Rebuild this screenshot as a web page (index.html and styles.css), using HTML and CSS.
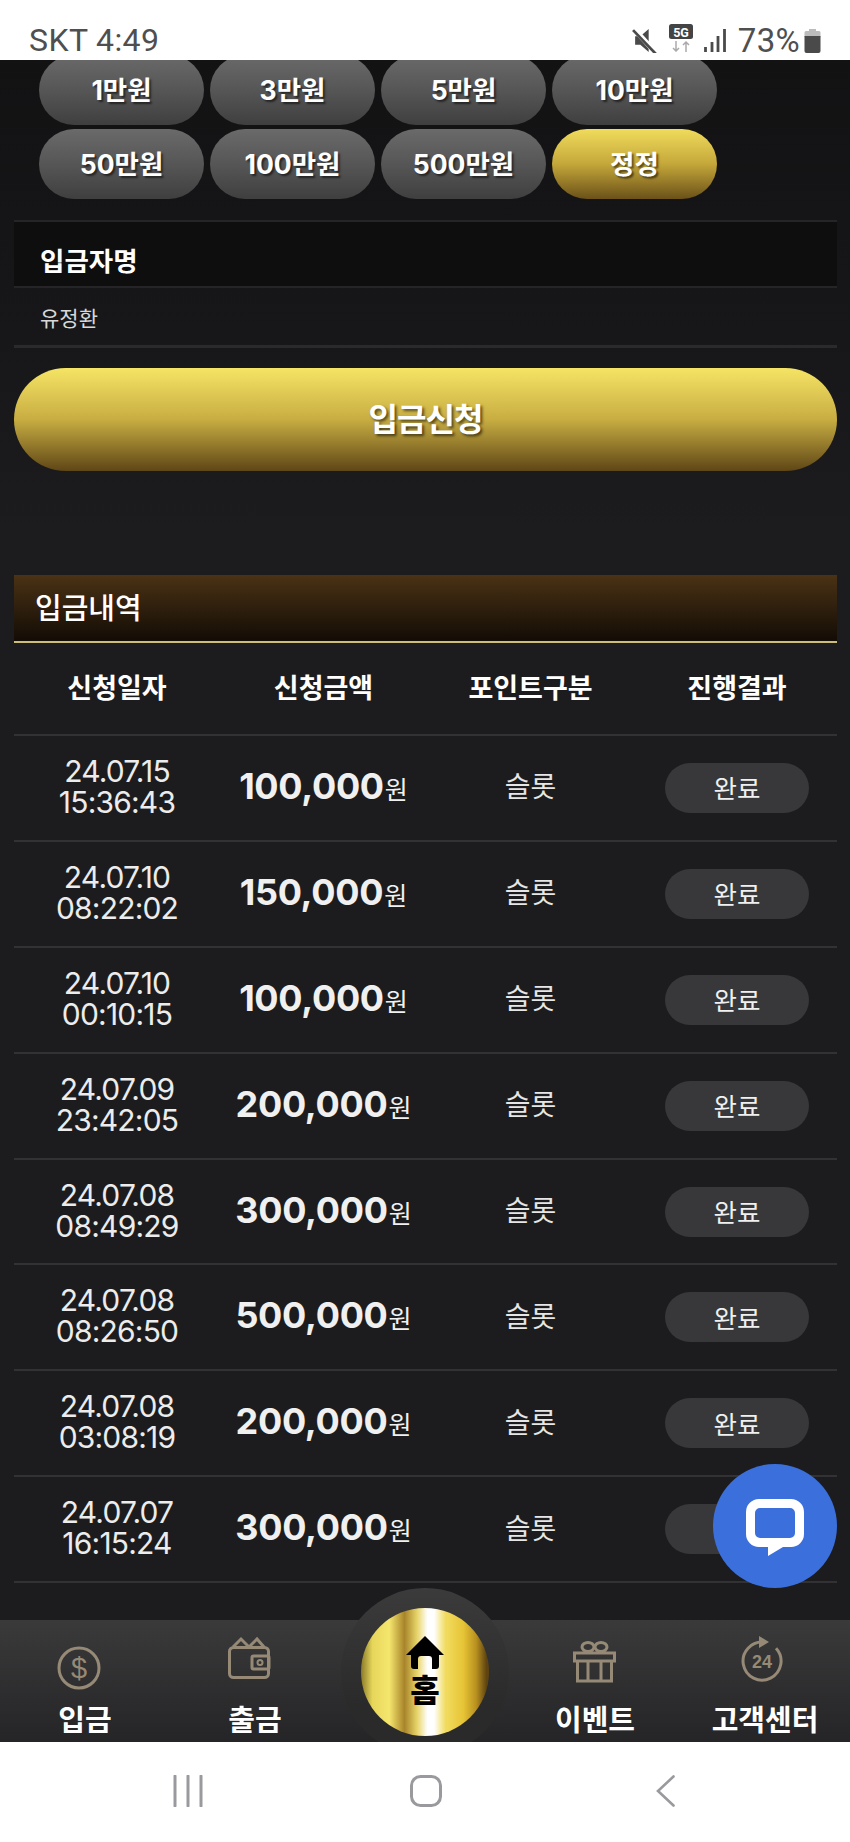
FILE: index.html
```html
<!DOCTYPE html>
<html lang="ko">
<head>
<meta charset="utf-8">
<title>입금</title>
<link rel="stylesheet" href="styles.css">
</head>
<body>
<div class="phone">
  <header class="status">
    <span class="status-left">SKT 4:49</span>
    <div class="status-right">
      <svg class="st-mute" viewBox="0 0 24 24"><path d="M3 8h5l8-7v22l-8-7H3z" fill="#4a4a4a"/><path d="M2 1l21 23" stroke="#fff" stroke-width="5"/><path d="M1 2l22 23" stroke="#4a4a4a" stroke-width="2.6"/></svg>
      <svg class="st-5g" viewBox="0 0 24 28"><rect width="24" height="15" rx="2.5" fill="#444"/><text x="12" y="12.5" text-anchor="middle" class="st-5g-text">5G</text><path d="M7 17v10M4 24l3 3 3-3" stroke="#aaa" stroke-width="1.5" fill="none"/><path d="M17 28V18M14 21l3-3 3 3" stroke="#aaa" stroke-width="1.5" fill="none"/></svg>
      <svg class="st-signal" viewBox="0 0 22 24"><path d="M1.5 19v5M8 14v10M14 8v16M20.5 1v23" stroke="#4a4a4a" stroke-width="2.8"/></svg>
      <span class="st-pct">73%</span>
      <svg class="st-batt" viewBox="0 0 17 25"><path d="M5 1h7v2H5z" fill="#bbb"/><path d="M2 3h13a1.5 1.5 0 0 1 1.5 1.5V9H.5V4.5A1.5 1.5 0 0 1 2 3z" fill="#bbb"/><path d="M.5 8h16v15a2 2 0 0 1-2 2h-12a2 2 0 0 1-2-2z" fill="#4a4a4a"/></svg>
    </div>
  </header>

  <main class="main">
    <div class="scroll">
      <div class="amount-grid">
        <button class="amt">1만원</button>
        <button class="amt">3만원</button>
        <button class="amt">5만원</button>
        <button class="amt">10만원</button>
        <button class="amt">50만원</button>
        <button class="amt">100만원</button>
        <button class="amt">500만원</button>
        <button class="amt amt-gold">정정</button>
      </div>

      <section class="field">
        <div class="field-label">입금자명</div>
        <div class="field-value">유정환</div>
      </section>

      <button class="submit">입금신청</button>

      <h2 class="title">입금내역</h2>

      <div class="row head">
        <div>신청일자</div><div>신청금액</div><div>포인트구분</div><div>진행결과</div>
      </div>

      <div class="row"><div class="date">24.07.15<br>15:36:43</div><div class="money">100,000<span class="won">원</span></div><div class="kind">슬롯</div><div class="result"><span class="pill">완료</span></div></div>
      <div class="row"><div class="date">24.07.10<br>08:22:02</div><div class="money">150,000<span class="won">원</span></div><div class="kind">슬롯</div><div class="result"><span class="pill">완료</span></div></div>
      <div class="row"><div class="date">24.07.10<br>00:10:15</div><div class="money">100,000<span class="won">원</span></div><div class="kind">슬롯</div><div class="result"><span class="pill">완료</span></div></div>
      <div class="row"><div class="date">24.07.09<br>23:42:05</div><div class="money">200,000<span class="won">원</span></div><div class="kind">슬롯</div><div class="result"><span class="pill">완료</span></div></div>
      <div class="row"><div class="date">24.07.08<br>08:49:29</div><div class="money">300,000<span class="won">원</span></div><div class="kind">슬롯</div><div class="result"><span class="pill">완료</span></div></div>
      <div class="row"><div class="date">24.07.08<br>08:26:50</div><div class="money">500,000<span class="won">원</span></div><div class="kind">슬롯</div><div class="result"><span class="pill">완료</span></div></div>
      <div class="row"><div class="date">24.07.08<br>03:08:19</div><div class="money">200,000<span class="won">원</span></div><div class="kind">슬롯</div><div class="result"><span class="pill">완료</span></div></div>
      <div class="row"><div class="date">24.07.07<br>16:15:24</div><div class="money">300,000<span class="won">원</span></div><div class="kind">슬롯</div><div class="result"><span class="pill">완료</span></div></div>
    </div>

    <div class="chat">
      <svg class="chat-icon" viewBox="0 0 58 58"><path fill="#fff" fill-rule="evenodd" d="M13 0h32a13 13 0 0 1 13 13v22a13 13 0 0 1-13 13h-8L22 57V48h-9A13 13 0 0 1 0 35V13A13 13 0 0 1 13 0zM14 9a5 5 0 0 0-5 5v20a5 5 0 0 0 5 5h30a5 5 0 0 0 5-5V14a5 5 0 0 0-5-5z"/></svg>
    </div>

    <nav class="nav">
      <a class="nav-item">
        <svg class="nav-icon" viewBox="0 0 60 60"><circle cx="24" cy="36" r="20" class="ln"/><text x="24" y="46" text-anchor="middle" class="ic-text ic-dollar">$</text></svg>
        <span class="nav-label">입금</span>
      </a>
      <a class="nav-item">
        <svg class="nav-icon" viewBox="0 0 60 60"><rect x="4.5" y="15.5" width="39" height="30" rx="4" class="ln"/><path d="M8 15l8-8 8 8 8-8 7 8" class="ln"/><rect x="27" y="24" width="17" height="13" rx="1.5" class="ln"/><circle cx="35" cy="30.5" r="2.5" class="ln-thin"/></svg>
        <span class="nav-label">출금</span>
      </a>
      <div class="nav-item nav-home">
        <div class="home-ring">
          <div class="home-gold">
            <svg class="home-icon" viewBox="0 0 38 33"><path fill="#000" d="M19 0l19 19h-5v11a3 3 0 0 1-3 3h-4V23a3 3 0 0 0-3-3h-8a3 3 0 0 0-3 3v10H8a3 3 0 0 1-3-3V19H0z"/></svg>
            <span class="home-label">홈</span>
          </div>
        </div>
      </div>
      <a class="nav-item">
        <svg class="nav-icon" viewBox="0 0 60 60"><rect x="9.5" y="21" width="40" height="8" class="ln"/><path d="M12.5 29v20h34V29M23 29v20M36 29v20" class="ln"/><ellipse cx="23" cy="15" rx="6" ry="4.5" class="ln"/><ellipse cx="36" cy="15" rx="6" ry="4.5" class="ln"/></svg>
        <span class="nav-label">이벤트</span>
      </a>
      <a class="nav-item">
        <svg class="nav-icon" viewBox="0 0 60 60"><path d="M29 10.2A19 19 0 1 0 41 16.2" class="ln"/><path d="M24 4l10 6-10 6z" class="ln-fill"/><text x="27" y="35.5" text-anchor="middle" class="ic-text ic-24">24</text></svg>
        <span class="nav-label">고객센터</span>
      </a>
    </nav>
  </main>

  <footer class="sysbar">
    <svg class="sys sys-recent" viewBox="0 0 30 32"><path d="M2 1v30M15 1v30M28 1v30" stroke="#9a9a9e" stroke-width="3" stroke-linecap="round"/></svg>
    <svg class="sys sys-home" viewBox="0 0 32 32"><rect x="1.5" y="1.5" width="29" height="29" rx="9" fill="none" stroke="#9a9a9e" stroke-width="3"/></svg>
    <svg class="sys sys-back" viewBox="0 0 19 32"><path d="M17.5 1.5L2 16l15.5 14.5" fill="none" stroke="#9a9a9e" stroke-width="2.6" stroke-linecap="round"/></svg>
  </footer>
</div>
</body>
</html>
```

FILE: styles.css
```css
* { box-sizing: border-box; margin: 0; padding: 0; }
html, body { width: 850px; height: 1842px; overflow: hidden; background: #fff; }
body { font-family: Inter, "Noto Sans CJK KR", sans-serif; color: #fff; }

.phone { width: 850px; height: 1842px; display: flex; flex-direction: column; }

/* status bar */
.status { height: 60px; flex: none; background: #fff; display: flex; align-items: center; justify-content: space-between; padding: 20px 29px 0 29px; color: #4f4f4f; font-family: Roboto, sans-serif; }
.status-left { font-size: 32px; letter-spacing: .4px; }
.status-right { display: flex; align-items: center; }
.st-mute { width: 25px; height: 25px; }
.st-5g { width: 24px; height: 28px; margin-left: 12px; margin-top: -4px; }
.st-5g-text { font: 700 12.5px Roboto, sans-serif; fill: #fff; }
.st-signal { width: 22px; height: 24px; margin-left: 11px; }
.st-pct { font-size: 33px; letter-spacing: .3px; margin-left: 12px; }
.st-batt { width: 17px; height: 25px; margin-left: 4px; }

/* main */
.main { flex: 1; position: relative; overflow: hidden; background: #1c1c1e; }
.scroll { margin-top: -5px; padding: 0 13px 0 14px; background: linear-gradient(#121213 0, #17171a 280px, #1c1c1e 480px) no-repeat; }

.amount-grid { display: grid; grid-template-columns: repeat(4, 165px); gap: 4px 6px; padding-left: 25px; }
.amt { height: 70px; border: 0; border-radius: 35px; padding-bottom: 4px; background: linear-gradient(#6a6a6a, #565657 50%, #3f3f40); color: #fff; font: 700 26.5px Inter, "Noto Sans CJK KR", sans-serif; text-shadow: 2px 2px 2px rgba(0,0,0,.55); }
.amt-gold { background: linear-gradient(#f0dc5c, #c4a73a 50%, #6b5118); }

.field { margin-top: 21px; }
.field-label { height: 68px; background: #0e0e0f; border-top: 2px solid #252527; border-bottom: 2px solid #252527; display: flex; align-items: center; padding: 10px 0 0 26px; font-size: 26.5px; font-weight: 700; }
.field-value { height: 60px; border-bottom: 3px solid #2a2a2c; display: flex; align-items: center; padding-left: 26px; font-size: 21px; color: #d8d8d8; }

.submit { display: block; width: 823px; height: 103px; margin-top: 20px; padding-bottom: 6px; border: 0; border-radius: 52px; background: linear-gradient(#f5e465, #c8ad42 50%, #5f4616); color: #fff; font: 700 32px Inter, "Noto Sans CJK KR", sans-serif; letter-spacing: -1px; text-shadow: 2px 2px 3px rgba(0,0,0,.6); }

.title { height: 68px; margin-top: 104px; padding: 0 0 4px 21px; background: linear-gradient(#4a3215, #130c05); border-bottom: 2px solid #cdbd7a; display: flex; align-items: center; font-size: 29px; font-weight: 500; }

.row { display: grid; grid-template-columns: 206px 207px 207px 206px; height: 105.9px; width: 823px; align-items: center; text-align: center; border-bottom: 2px solid #323234; }
.head { height: 93px; padding-bottom: 4px; font-size: 27px; font-weight: 700; }

.date { padding-bottom: 2px; font-size: 30px; line-height: 31px; letter-spacing: -.8px; color: #ececec; }
.money { padding-bottom: 4px; font-size: 36px; font-weight: 700; letter-spacing: -.3px; color: #f0f0f0; white-space: nowrap; }
.won { font-size: 25px; font-weight: 400; letter-spacing: 0; margin-left: 1px; }
.kind { padding-bottom: 5px; font-size: 28px; color: #e6e6e6; }
.result { display: flex; justify-content: center; }
.pill { width: 144px; height: 50px; padding-bottom: 2px; border-radius: 25px; background: #38383a; display: flex; align-items: center; justify-content: center; font-size: 25.5px; color: #f0f0f0; }

/* floating chat */
.chat { position: absolute; top: 1404px; right: 13px; width: 124px; height: 124px; border-radius: 50%; background: #3b6fdc; display: flex; align-items: center; justify-content: center; }
.chat-icon { width: 58px; height: 58px; margin-top: 3px; }

/* bottom nav */
.nav { position: absolute; left: 0; right: 0; bottom: 0; height: 122px; padding-top: 12px; background: linear-gradient(#3a3a3b, #252426); display: grid; grid-template-columns: repeat(5, 170px); }
.nav-item { display: flex; flex-direction: column; align-items: center; position: relative; }
.nav-icon { width: 60px; height: 60px; }
.nav-label { margin-top: 12px; font-size: 29px; line-height: 34px; font-weight: 700; white-space: nowrap; color: #fff; }
.ln { fill: none; stroke: #968a77; stroke-width: 3; }
.ln-thin { fill: none; stroke: #968a77; stroke-width: 2; }
.ln-fill { fill: #968a77; }
.ic-text { fill: #968a77; font-family: "Liberation Sans", sans-serif; }
.ic-dollar { font-size: 29px; }
.ic-24 { font-size: 18px; font-weight: 700; }

.home-ring { position: absolute; top: -44px; left: 1px; width: 168px; height: 168px; border-radius: 50%; background: linear-gradient(#3b3b3c, #2a2a2b 70%); display: flex; align-items: center; justify-content: center; }
.home-gold { width: 128px; height: 128px; border-radius: 50%; display: flex; flex-direction: column; align-items: center; padding-top: 28px; background: linear-gradient(90deg, #8a7a2a 0, #e6d65a 9%, #f5e66e 22%, #a8842a 34%, #e8d66a 44%, #fff 52%, #fff 57%, #f2dc60 66%, #e6c435 80%, #b89020 90%, #5f4410 98%); }
.home-icon { width: 38px; height: 33px; }
.home-label { font-size: 32px; line-height: 38px; font-weight: 900; color: #000; margin-top: 3px; }

/* system bar */
.sysbar { height: 100px; flex: none; background: #fff; display: grid; grid-template-columns: 237px 246px 1fr; padding: 33px 0 0 173px; align-items: start; }
.sys { display: block; }
.sys-recent { width: 30px; height: 32px; }
.sys-home { width: 32px; height: 32px; }
.sys-back { width: 19px; height: 32px; }
```
